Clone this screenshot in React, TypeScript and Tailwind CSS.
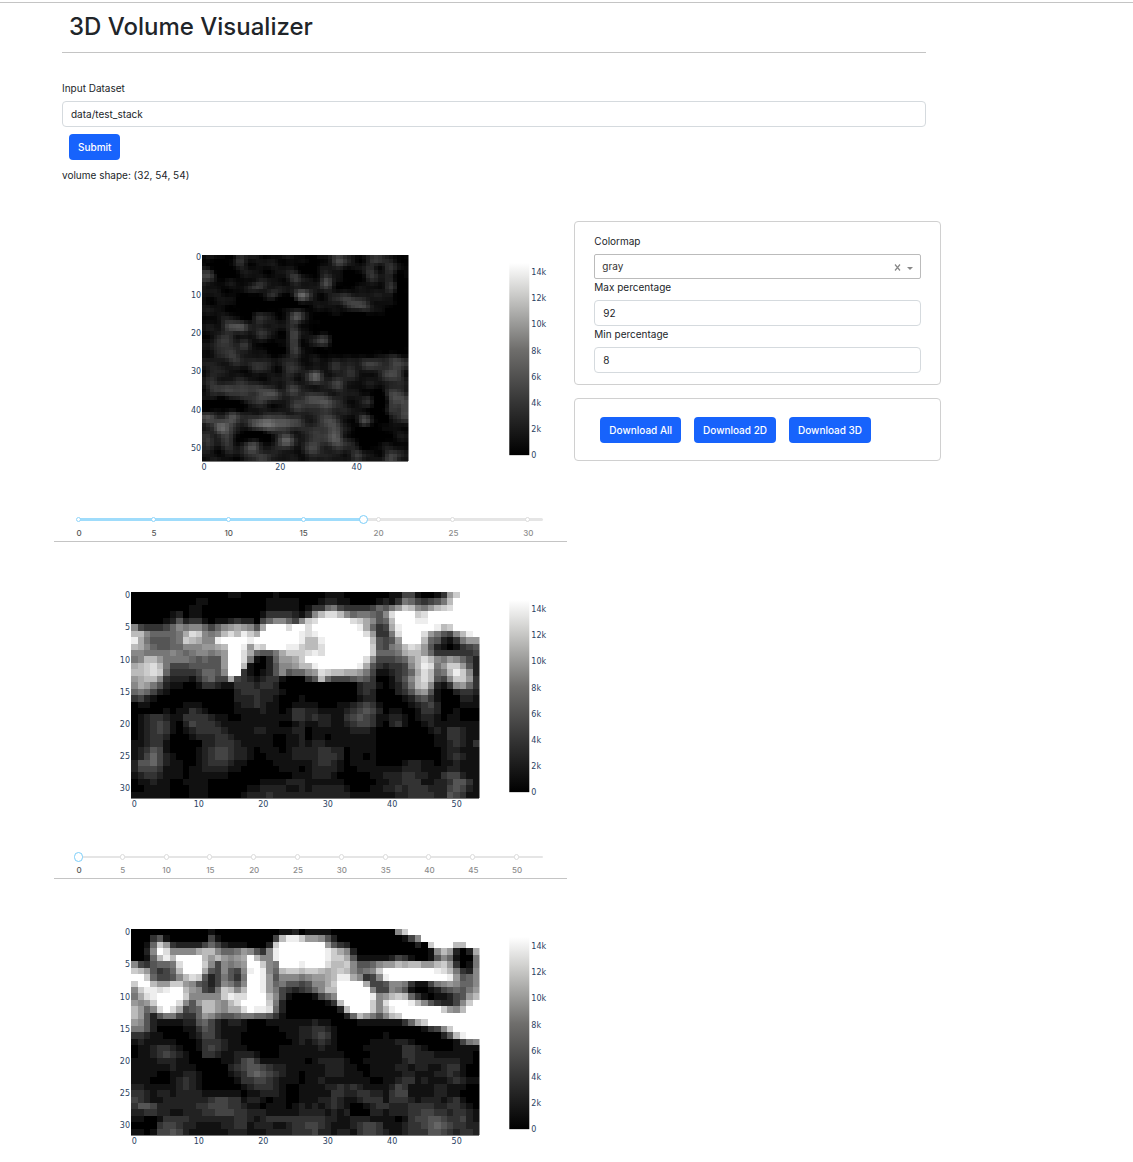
import React, { useState } from 'react';

const SIDE_ROWS = [
  '000000000000000110000010000' + '000111' + '000000' + '011441' + '00139c' + 'fff',
  '000000000011000000000111110' + '001221' + '100001' + '213764' + '3457bf' + 'fff',
  '000000000110000000000111110' + '133674' + '333346' + '579cb8' + '79bcdf' + 'fff',
  '000000120110000000001333321' + '38bddb' + '867765' + '8dfffc' + 'dfffff' + 'fff',
  '000001252331011232204688648' + 'cdffff' + 'fdca85' + '6bfffe' + 'efffff' + 'fff',
  '8433346878864689a985afffdff' + 'dfffff' + 'ffea63' + '4aefff' + 'ffebcf' + 'fff',
  'bb866667adc878bdbecaffffffe' + 'deffff' + 'fffd93' + '37dfff' + 'd97548' + 'bef',
  'ea755567cba88effffefffffffe' + 'bbefff' + 'ffffb5' + '459fff' + 'b65213' + '799',
  'ba86556688899abffe9dcfffeec' + 'bbdfff' + 'ffffc5' + '478bdc' + '952101' + '345',
  '887777876788789ffda6557accc' + 'dedfff' + 'ffffc6' + '667abb' + '963333' + '334',
  '78bb97777656559ffd7102699ac' + 'ffffff' + 'fffd84' + '44569b' + 'db8798' + '642',
  'abcdb7444555559ffb10025889b' + 'beffff' + 'ffea53' + '23348b' + 'ed79cc' + '952',
  'bbcdc6333346658ff3101258566' + '89dcbb' + 'aa9741' + '12346a' + 'db67be' + 'c82',
  '9abb83222135644a43212331000' + '35b644' + '456530' + '01358b' + 'db548c' + 'c93',
  '8a9752110013321133323320000' + '000000' + '002331' + '01247b' + 'c82138' + '963',
  '676421000000000023332221000' + '000000' + '002320' + '002358' + '951002' + '332',
  '342100000000000022232210001' + '000000' + '001220' + '000124' + '531000' + '221',
  '011000001110000012232110011' + '110001' + '123431' + '000012' + '342000' + '111',
  '000001011321000011112110133' + '221111' + '234542' + '011001' + '332001' + '000',
  '012332113333211001111111133' + '232211' + '345431' + '122101' + '221011' + '000',
  '012343102433321111111110012' + '112211' + '234431' + '023100' + '121111' + '111',
  '012343101233332111122111122' + '011111' + '122210' + '000000' + '012133' + '211',
  '012332000122233211111100112' + '011011' + '111110' + '000000' + '001133' + '211',
  '112331000002233321111100112' + '122111' + '111110' + '000000' + '001123' + '213',
  '123541000012344322101110122' + '223322' + '011110' + '000000' + '000122' + '111',
  '124642100012344322100111122' + '223332' + '011010' + '000000' + '000123' + '211',
  '255642110012333211000011111' + '123321' + '011110' + '000122' + '110112' + '111',
  '244431110112222110000001110' + '122221' + '001111' + '111222' + '111122' + '111',
  '123321110111111000000000011' + '122210' + '000011' + '222332' + '211344' + '211',
  '011211001111000000001111222' + '111111' + '000001' + '122333' + '112235' + '531',
  '001111000111000000112222112' + '122222' + '100011' + '223233' + '322245' + '421',
  '111111000111000001222322222' + '222222' + '211111' + '112233' + '332254' + '311',
];

const FRONT_ROWS = [
  '000000000000100000000001120' + '111100' + '000000' + '008cff' + 'ffffff' + 'fff',
  '00035100000041000000004beec' + '998520' + '000000' + '000148' + 'ffffff' + 'fff',
  '0016c93222246421110002cffff' + 'fff953' + '200000' + '000002' + '0cfffb' + 'bff',
  '0028fd8888abb866798538effff' + 'fffeca' + '820000' + '000000' + '018b92' + '02a',
  '0016bebffffb9b989afb88effff' + 'fffecc' + 'a51111' + '124310' + '015861' + '007',
  '8435667dfffc848789ffc87fffe' + 'fffdbb' + 'c85568' + '99babb' + '99bc93' + '017',
  'cb95346bfffa548548efe86bccb' + 'ccbabc' + 'b8678c' + 'ffffff' + 'ffedb7' + '328',
  'ffc64458bdc5247537ffe958887' + '899abe' + 'ea8348' + 'efffff' + 'ffffe9' + '568',
  'cffb99cc9854248758ffe967554' + '588acf' + 'fffa44' + '588731' + '147898' + '668',
  '8ceedeffb98437cb8bffe974323' + '468bbf' + 'ffff84' + '487510' + '012456' + '579',
  '7adeffffc88888ceddfffb84100' + '01468f' + 'ffffe8' + '9bcb63' + '101124' + '59b',
  '989cfffd859bb98bdffffc72000' + '00013b' + 'ffffc8' + 'dfffeb' + '853224' + '8cf',
  'b968dfda456bb98aadfeed62000' + '000002' + 'bfffc8' + 'beffff' + 'fffc98' + 'bff',
  'b95257743369865567766531000' + '000000' + '26b975' + '8bcfff' + 'ffffff' + 'fff',
  '985211112256421221000111111' + '121100' + '001111' + '11136a' + 'cfffff' + 'fff',
  '775200001135421111000001112' + '233210' + '000000' + '000000' + '1348cf' + 'fff',
  '332110000124421110000000112' + '234310' + '000000' + '100000' + '00025b' + 'eff',
  '121111100013332110000000012' + '123210' + '000011' + '112210' + '000001' + '478',
  '011233210013432111000001111' + '112110' + '000111' + '111332' + '100001' + '111',
  '011234321003321122210001111' + '111111' + '000011' + '111332' + '221111' + '110',
  '111122211000001124531111111' + '012222' + '100111' + '111232' + '222222' + '110',
  '111111211100000234554322111' + '111222' + '110011' + '112212' + '211233' + '100',
  '111100112210000123565432110' + '111222' + '111011' + '111221' + '112232' + '100',
  '111000123210000013344321110' + '112111' + '111100' + '112331' + '211123' + '211',
  '221111123210000001233321001' + '111223' + '232111' + '124311' + '112211' + '100',
  '332122122221111110112221001' + '111133' + '223322' + '134411' + '112211' + '000',
  '432112222222344331221011001' + '112232' + '112333' + '133321' + '222123' + '100',
  '355422222233444332110111012' + '121232' + '100123' + '322233' + '332233' + '210',
  '223322112223344433222111112' + '222121' + '200022' + '122233' + '443323' + '321',
  '110013333222222233212333333' + '333221' + '122211' + '110134' + '455433' + '421',
  '000034432211112233122211233' + '443211' + '123443' + '111233' + '456543' + '322',
  '110144542111111222111222233' + '342212' + '213443' + '211233' + '355432' + '332',
];

// x, y, radius x, radius y, brightness
const SPOTS: number[][] = [
  [36, 1.5, 1.8, 2, 0.2], [10, 1.5, 1.3, 1.5, 0.15], [1, 5.5, 1.5, 1.5, 0.25], [14.5, 8.3, 1.5, 1, 0.2],
  [18.6, 10.5, 1.3, 1.2, 0.2], [26.3, 10.5, 1.6, 1.2, 0.36], [24.3, 6, 1.5, 1.2, 0.16], [32.6, 7, 1.3, 1.3, 0.26],
  [38.5, 11.7, 3.5, 1.2, 0.17], [41.5, 13.6, 2.5, 1, 0.18], [44, 5, 1.3, 2, 0.15], [49.5, 3.5, 1.3, 2.5, 0.14],
  [49.5, 9, 1.3, 1.5, 0.14], [45.5, 1, 1.3, 1.2, 0.15], [7.5, 18.7, 1.6, 1.1, 0.26], [10.3, 19, 1.5, 1.2, 0.2],
  [15, 16.5, 1.6, 1.4, 0.13], [16, 20.5, 2, 2, 0.12], [24.7, 16.2, 1.3, 1.2, 0.26], [24, 22.5, 1.2, 3.5, 0.22],
  [31.7, 22.4, 1.8, 1.3, 0.25], [5.6, 23, 1.6, 1.5, 0.2], [8, 26.5, 2, 2, 0.16], [11, 24, 1, 1.5, 0.12],
  [15.2, 28.6, 2, 1.2, 0.18], [23.2, 30, 1.5, 2.5, 0.13], [29.5, 31.9, 1.5, 1.5, 0.31], [35.6, 33.5, 2, 1.5, 0.18],
  [35.2, 28.3, 1.3, 1.5, 0.13], [39, 29.8, 1.5, 1.5, 0.14], [44.3, 28.3, 2, 1.2, 0.2], [50, 31, 2, 2, 0.22],
  [51.5, 28, 2.5, 1.2, 0.17], [3, 32, 1.3, 4, 0.11], [9.5, 35.2, 4.5, 1.5, 0.23], [17.8, 36.3, 2, 1.3, 0.23],
  [14.5, 38, 2, 1, 0.18], [23.9, 35.8, 1.7, 1.3, 0.2], [29.5, 38.2, 3, 1.3, 0.26], [25, 40, 2, 1.2, 0.13],
  [43.5, 38.3, 1.1, 1.5, 0.15], [51.5, 37, 1.8, 1.8, 0.2], [53, 41, 1.3, 2, 0.26], [49.8, 39, 1, 3, 0.14],
  [1.7, 42.7, 1.6, 1.2, 0.26], [5, 45.5, 1.7, 1.6, 0.3], [7.7, 43, 1.5, 1.6, 0.22], [17.5, 44.3, 3.3, 1.2, 0.34],
  [15, 43, 5, 1.5, 0.1], [24, 44, 3, 1.5, 0.16], [21.7, 48.8, 1.7, 1.5, 0.32], [13, 50.6, 1.5, 1.4, 0.31],
  [29.2, 49.5, 1.6, 3, 0.22], [34.7, 47, 1.8, 3.2, 0.28], [42.7, 43.5, 1.5, 1.3, 0.24], [40.4, 52.5, 1.6, 1.5, 0.16],
  [49.7, 53, 1.6, 1.5, 0.22], [1, 49, 1.3, 2, 0.16], [7, 48.5, 1.3, 2, 0.18], [16.5, 53, 2, 1, 0.2],
  [32, 43, 1.5, 3, 0.15], [38, 49, 2, 1, 0.13], [46, 33, 2, 2, 0.08], [35, 39, 3, 2, 0.08],
  [5, 3.5, 2.6, 2, -0.15], [20, 12.5, 5, 1.4, -0.15], [12, 13.5, 2.5, 2.5, -0.12], [46, 20.5, 8, 3, -0.25], [37, 18, 5, 1.6, -0.15],
  [37, 24.5, 5, 1.5, -0.12], [19, 24, 3, 2, -0.1], [5, 39.3, 5, 1.1, -0.15], [46, 38, 2, 4, -0.12],
  [43, 47, 4, 2.5, -0.12], [13, 47.5, 4, 1.1, -0.14], [28, 3, 2, 2, -0.1], [39, 6, 3, 2, -0.1], [52, 13, 1.5, 8, -0.14],
];

const TOP_CELLS: number[][] = Array.from({ length: 54 }, (_, y) =>
  Array.from({ length: 54 }, (_, x) => {
    const texture = 0.052 + 0.03 * Math.sin(x * 1.1 + y * 0.5) * Math.cos(y * 0.9 - x * 0.4) + 0.025 * Math.sin(x * 0.6 - y * 1.3);
    const v = SPOTS.reduce((sum, [cx, cy, rx, ry, a]) => {
      const dx = (x + 0.5 - cx) / rx;
      const dy = (y + 0.5 - cy) / ry;
      return sum + a * Math.exp(-0.55 * (dx * dx + dy * dy));
    }, texture);
    return Math.max(0, Math.min(255, Math.round(v * 255)));
  })
);

const parse = (rows: string[]) => rows.map((r) => r.split('').map((c) => parseInt(c, 16) * 17));
const SIDE_CELLS = parse(SIDE_ROWS);
const FRONT_CELLS = parse(FRONT_ROWS);

type HeatmapProps = { id: string; label: string; cells: number[][]; left: number; width: number; xStep: number; yStep: number };

function Heatmap({ id, label, cells, left, width, xStep, yStep }: HeatmapProps) {
  const top = 50;
  const height = 206;
  const cw = width / cells[0].length;
  const ch = height / cells.length;
  const ticks = (count: number, step: number) => Array.from({ length: Math.ceil(count / step) }, (_, i) => i * step);
  return (
    <svg viewBox="0 0 513 300" className="block w-full font-['DejaVu_Sans',sans-serif] text-[8px]" role="img" aria-label={label}>
      <defs>
        <linearGradient id={id} x1="0" y1="1" x2="0" y2="0">
          <stop offset="0" stopColor="#000" />
          <stop offset="0.28" stopColor="#363636" />
          <stop offset="0.55" stopColor="#6f6e6c" />
          <stop offset="0.7" stopColor="#9f9f9d" />
          <stop offset="0.85" stopColor="#d0d0ce" />
          <stop offset="1" stopColor="#fff" />
        </linearGradient>
      </defs>
      <g shapeRendering="crispEdges">
        <rect x={left} y={top} width={width} height={height + 1} fill="#777" />
        {cells.map((row, y) =>
          row.map((v, x) => (
            <rect
              key={`${x}-${y}`}
              x={left + x * cw}
              y={top + y * ch}
              width={x === row.length - 1 ? cw + 1 : cw}
              height={ch}
              fill={`rgb(${v},${v},${v})`}
            />
          ))
        )}
        <rect x={left + width} y={top} width="1" height={height + 1} fill="#fff" opacity="0.5" />
      </g>
      <rect x="455" y="58" width="20" height="192" fill={`url(#${id})`} />
      <g fill="#2a3f5f">
        {ticks(cells.length, yStep).map((t) => (
          <text key={t} x={left - 1} y={top + (t + 0.5) * ch + 3} textAnchor="end">{t}</text>
        ))}
        {ticks(cells[0].length, xStep).map((t) => (
          <text key={t} x={left + (t + 0.5) * cw} y="265" textAnchor="middle">{t}</text>
        ))}
        {[0, 2, 4, 6, 8, 10, 12, 14].map((t) => (
          <text key={t} x="477" y={253 - t * 13.07}>{t === 0 ? '0' : `${t}k`}</text>
        ))}
      </g>
    </svg>
  );
}

function SliceSlider({ label, max, start, thin }: { label: string; max: number; start: number; thin?: boolean }) {
  const [value, setValue] = useState(start);
  const marks = Array.from({ length: Math.floor(max / 5) + 1 }, (_, i) => i * 5);
  return (
    <div className="border-b border-[#c4c4c4] pl-[25px] pr-6 pt-[5px]">
      <div className="relative h-[31px]">
        <div className={`absolute inset-x-0 rounded ${thin ? 'top-[9px] h-0.5' : 'top-2 h-[3px]'} bg-[#e5e5e5]`}>
          <div className="h-full rounded bg-[#9fdcfb]" style={{ width: `${(value / max) * 100}%` }} />
        </div>
        {marks.map((m) => (
          <React.Fragment key={m}>
            <span
              className={`absolute top-[7px] -ml-[3px] w-[5px] rounded-full border bg-white ${thin ? 'h-1.5' : 'h-[5px]'} ${
                m <= value ? 'border-[#8fd5fa]' : 'border-[#dcdcdc]'
              }`}
              style={{ left: `${(m / max) * 100}%` }}
            />
            <span
              className={`absolute top-[18px] -translate-x-1/2 text-[8px] font-medium leading-[10px] ${m <= value ? 'text-[#555]' : 'text-[#8c8c8c]'}`}
              style={{ left: `${(m / max) * 100}%` }}
            >
              {m}
            </span>
          </React.Fragment>
        ))}
        <input
          type="range"
          aria-label={label}
          min={0}
          max={max}
          value={value}
          onChange={(e) => setValue(Number(e.target.value))}
          className={`absolute -left-[5px] top-[5px] w-[calc(100%+9px)] cursor-pointer appearance-none bg-transparent outline-none [&::-webkit-slider-thumb]:w-[9px] [&::-webkit-slider-thumb]:appearance-none [&::-webkit-slider-thumb]:rounded-full [&::-webkit-slider-thumb]:border [&::-webkit-slider-thumb]:border-[#7ccef9] [&::-webkit-slider-thumb]:bg-white ${
            thin ? 'h-2.5 [&::-webkit-slider-thumb]:h-2.5' : 'h-[9px] [&::-webkit-slider-thumb]:h-[9px]'
          }`}
        />
      </div>
    </div>
  );
}

const inputClass = 'block h-[26px] w-full rounded border border-[#d5dade] bg-white px-2 text-[10px] text-[#212529] outline-none';
const labelClass = 'mb-1 block leading-[17px]';
const buttonClass = 'h-[26px] cursor-pointer rounded bg-[#1763fc] px-[9px] text-[10px] font-medium text-white';

export default function App() {
  const [colormap, setColormap] = useState('gray');
  return (
    <div className="bg-white pt-0.5 font-[Inter,sans-serif] text-[10px] text-[#212529]">
      <hr className="border-[#c4c4c4]" />
      <main className="pl-[54px] pr-[192px]">
        <header className="ml-2 mr-[15px] border-b border-[#c4c4c4] pb-[9px] pl-[7px] pt-[7px]">
          <h1 className="text-2xl font-medium leading-[33px]">3D Volume Visualizer</h1>
        </header>
        <form className="ml-2 mr-[15px] pt-[27px]" onSubmit={(e) => e.preventDefault()}>
          <label htmlFor="dataset" className={labelClass}>Input Dataset</label>
          <input id="dataset" type="text" defaultValue="data/test_stack" className={inputClass} />
          <button type="submit" className={`ml-[7px] mt-[7px] block ${buttonClass}`}>Submit</button>
          <p className="mt-[7px] leading-[17px]">volume shape: (32, 54, 54)</p>
        </form>
        <div className="mt-[21px] grid grid-cols-[7fr_5fr] gap-[7px]">
          <section className="min-w-0">
            <Heatmap id="bar-top" label="Top slice" cells={TOP_CELLS} left={148} width={206} xStep={20} yStep={10} />
            <SliceSlider label="Top slice index" max={31} start={19} />
            <Heatmap id="bar-side" label="Side slice" cells={SIDE_CELLS} left={77} width={348} xStep={10} yStep={5} />
            <SliceSlider label="Side slice index" max={53} start={0} thin />
            <Heatmap id="bar-front" label="Front slice" cells={FRONT_CELLS} left={77} width={348} xStep={10} yStep={5} />
          </section>
          <aside className="min-w-0 pt-4">
            <div className="rounded border border-[#d0d0d0] px-[19px] pb-[11px] pt-[11px]">
              <label htmlFor="colormap" className={labelClass}>Colormap</label>
              <div className="relative">
                <select
                  id="colormap"
                  value={colormap}
                  onChange={(e) => setColormap(e.target.value)}
                  className="block h-[25px] w-full appearance-none rounded-xs border border-[#bbb] bg-white px-[7px] text-[10px] text-[#333] outline-none"
                >
                  <option value="">Select...</option>
                  <option value="gray">gray</option>
                  <option value="viridis">viridis</option>
                </select>
                <button
                  type="button"
                  aria-label="Clear colormap"
                  onClick={() => setColormap('')}
                  className="absolute right-5 top-[10px] h-[7px] w-[7px] cursor-pointer text-[#888]"
                >
                  <svg viewBox="0 0 7 7" className="block h-full w-full" fill="none" stroke="currentColor" strokeWidth="1.2">
                    <path d="M1 .5L6 6.5M6 .5L1 6.5" />
                  </svg>
                </button>
                <svg viewBox="0 0 6 3" className="pointer-events-none absolute right-2 top-[13px] h-[3px] w-1.5" fill="#888">
                  <path d="M0 0H6L3 3Z" />
                </svg>
              </div>
              <label htmlFor="max-percentage" className={labelClass}>Max percentage</label>
              <input id="max-percentage" type="text" defaultValue="92" className={inputClass} />
              <label htmlFor="min-percentage" className={labelClass}>Min percentage</label>
              <input id="min-percentage" type="text" defaultValue="8" className={inputClass} />
            </div>
            <div className="mt-[13px] flex flex-wrap gap-[13px] rounded border border-[#d0d0d0] px-[25px] pb-[17px] pt-[18px]">
              <button type="button" className={buttonClass}>Download All</button>
              <button type="button" className={buttonClass}>Download 2D</button>
              <button type="button" className={buttonClass}>Download 3D</button>
            </div>
          </aside>
        </div>
      </main>
    </div>
  );
}
